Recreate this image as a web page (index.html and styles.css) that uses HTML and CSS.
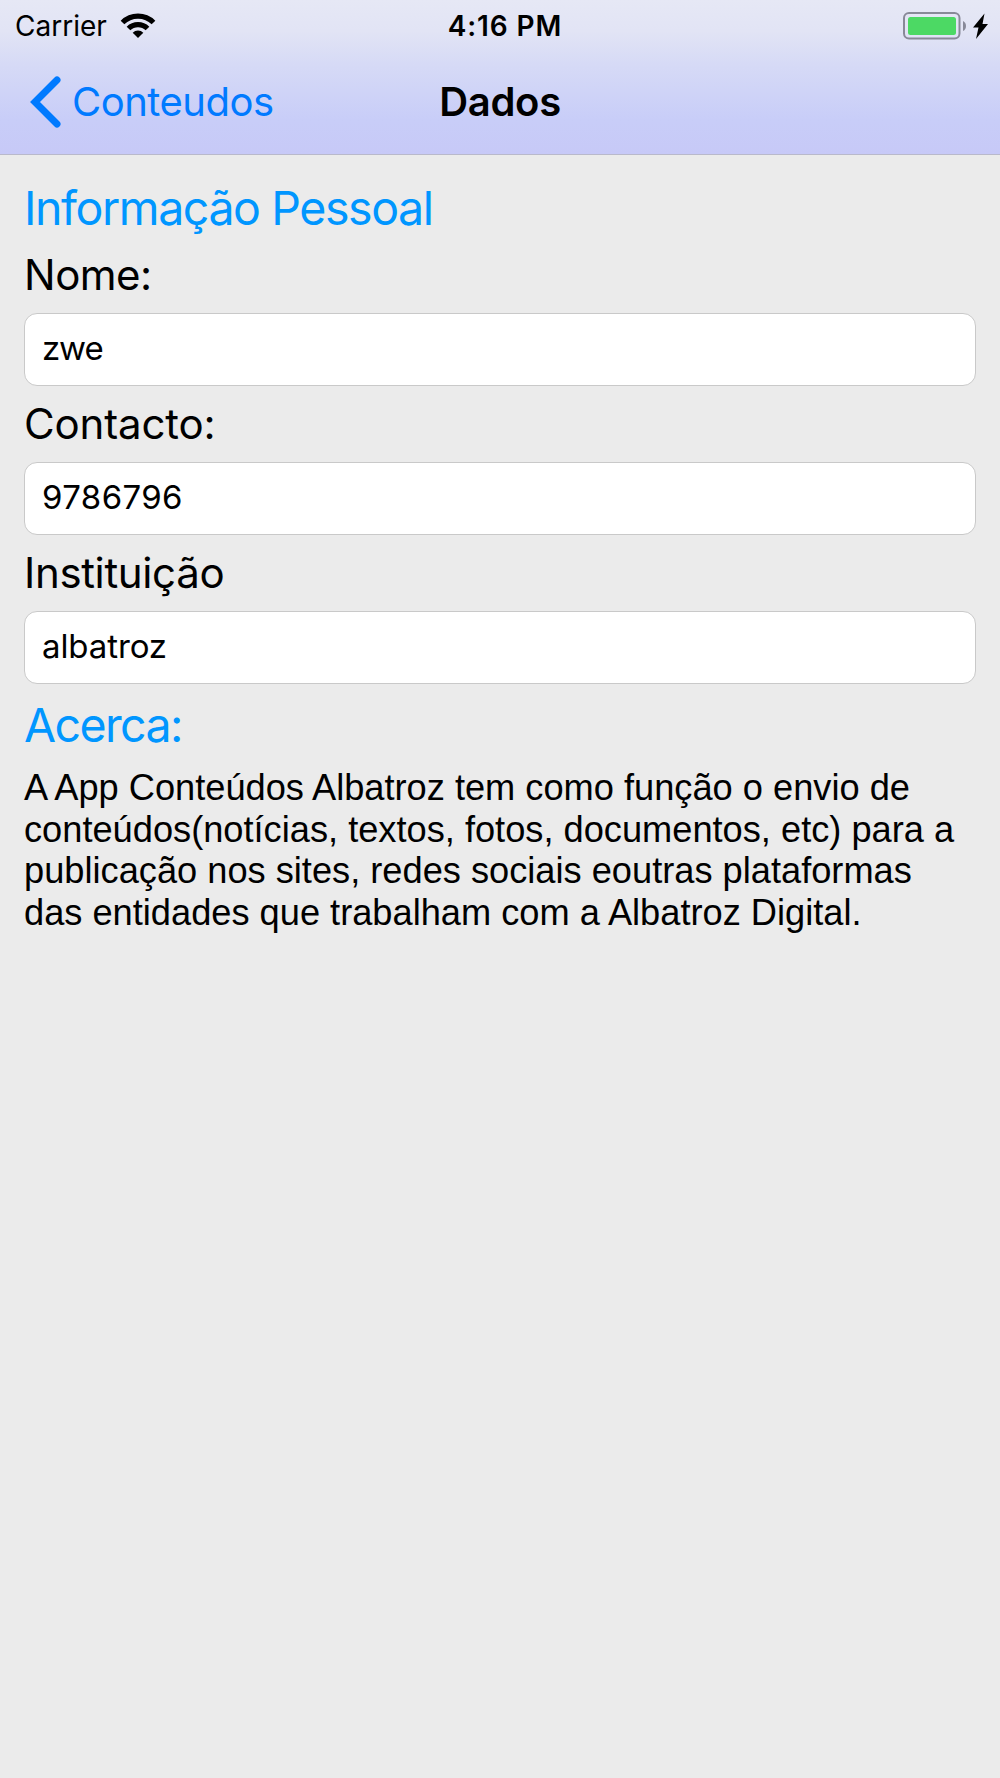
FILE: index.html
```html
<!DOCTYPE html>
<html lang="pt">
<head>
    <meta charset="UTF-8">
    <meta name="viewport" content="width=device-width, initial-scale=1.0">
    <title>Dados</title>
    <link rel="stylesheet" href="styles.css">
</head>
<body>
    <header class="header">
        <div class="status-bar">
            <div class="status-left">
                <span class="carrier">Carrier</span>
                <svg class="wifi" width="36" height="26" viewBox="0 0 36 26">
                    <path d="M2.500 9.500A22 22 0 0 1 33.500 9.500" fill="none" stroke="#000" stroke-width="5.200"/>
                    <path d="M8.500 15.500A13.500 13.500 0 0 1 27.500 15.500" fill="none" stroke="#000" stroke-width="5.200"/>
                    <path d="M18 25L12.700 19.700A7.500 7.500 0 0 1 23.300 19.700Z"/>
                </svg>
            </div>
            <span class="time">4:16 PM</span>
            <div class="status-right">
                <svg class="battery" width="86" height="28" viewBox="0 0 86 28">
                    <rect x="1" y="1" width="55.500" height="25.500" rx="5" fill="none" stroke="#888998" stroke-width="2"/>
                    <rect x="5" y="5" width="48" height="18" rx="2.500" fill="#4cd964"/>
                    <path d="M60 9Q63 10.500 63 14T60 19Z" fill="#888998"/>
                    <path d="M81.500 1.500L70 15.500H75.500L73 27L85 12H79.500Z"/>
                </svg>
            </div>
        </div>
        <nav class="nav-bar">
            <a class="back">
                <svg width="32" height="54" viewBox="0 0 32 54">
                    <path d="M27 5L5 27L27 49" fill="none" stroke="#007aff" stroke-width="7" stroke-linecap="round"/>
                </svg>
                <span>Conteudos</span>
            </a>
            <h1 class="title">Dados</h1>
        </nav>
    </header>
    <main class="content">
        <h2 class="section-title">Informação Pessoal</h2>
        <form class="form">
            <label class="label nome" for="nome">Nome:</label>
            <input class="field field-nome" type="text" id="nome" value="zwe">
            <label class="label" for="contacto">Contacto:</label>
            <input class="field field-contacto" type="text" id="contacto" value="9786796">
            <label class="label inst" for="instituicao">Instituição</label>
            <input class="field" type="text" id="instituicao" value="albatroz">
        </form>
        <h2 class="section-title acerca">Acerca:</h2>
        <p class="about">
            A App Conteúdos Albatroz tem como função o envio de<br>
            conteúdos(notícias, textos, fotos, documentos, etc) para a<br>
            publicação nos sites, redes sociais eoutras plataformas<br>
            das entidades que trabalham com a Albatroz Digital.
        </p>
    </main>
</body>
</html>
```
FILE: styles.css
```css
* {
    margin: 0;
    padding: 0;
    box-sizing: border-box;
}

body {
    font-family: Inter, "Liberation Sans", sans-serif;
    background: #ebebeb;
    color: #000;
    min-height: 100vh;
}

.header {
    height: 155px;
    background: linear-gradient(#e6e8f5, #e2e4f5 20%, #d6daf6 42%, #c8cdf8 78%, #c7c9f7);
    border-bottom: 1px solid #b9b9cb;
}

.status-bar {
    display: grid;
    grid-template-columns: 1fr auto 1fr;
    align-items: center;
    height: 48px;
    padding: 3px 11px 0 15px;
    font-size: 28px;
}

.status-left {
    display: flex;
    align-items: center;
    gap: 13px;
}

.time {
    padding-left: 6px;
    font-weight: 600;
    letter-spacing: 0.9px;
}

.status-right {
    display: flex;
    justify-content: flex-end;
}

.nav-bar {
    display: grid;
    grid-template-columns: 1fr auto 1fr;
    align-items: center;
    height: 107px;
    padding: 0 30px;
    font-size: 40px;
}

.back {
    display: flex;
    align-items: center;
    gap: 10px;
    letter-spacing: -0.5px;
    color: #007aff;
}

.title {
    font-size: 40px;
    font-weight: 600;
    letter-spacing: -0.3px;
}

.content {
    padding: 25px 24px 0;
}

.section-title {
    font-size: 46.5px;
    font-weight: 400;
    line-height: 56px;
    letter-spacing: -1.42px;
    color: #0096ff;
}

.form {
    display: flex;
    flex-direction: column;
}

.label {
    font-size: 42px;
    line-height: 76px;
    letter-spacing: -0.15px;
}

.nome {
    line-height: 77px;
    letter-spacing: -0.5px;
}

.inst {
    letter-spacing: -0.35px;
}

.field {
    height: 73px;
    padding: 0 17px 4px;
    font-family: inherit;
    font-size: 33px;
    letter-spacing: -0.1px;
    color: #000;
    background: #fff;
    border: 1px solid #c9c9c9;
    border-radius: 13px;
    outline: none;
}

.field-nome {
    letter-spacing: -1.1px;
}

.field-contacto {
    letter-spacing: 0.4px;
}

.acerca {
    line-height: 82px;
    letter-spacing: -1.6px;
}

.about {
    padding-top: 1px;
    font-family: "Liberation Sans", Arial, sans-serif;
    font-size: 36.22px;
    line-height: 41.7px;
    white-space: nowrap;
}
```
